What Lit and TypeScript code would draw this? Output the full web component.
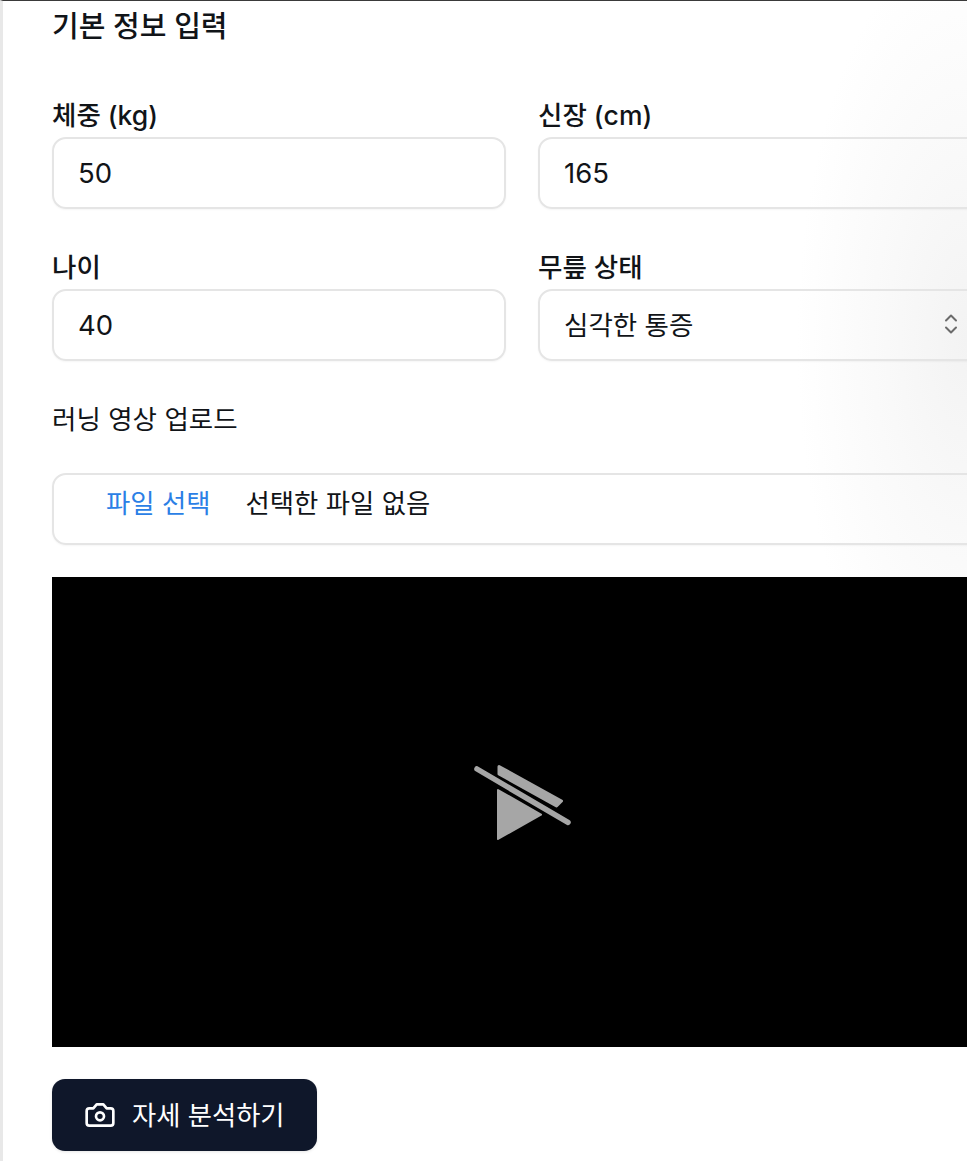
import { LitElement, html, css } from "lit";
import { customElement } from "lit/decorators.js";

@customElement("app-root")
export class AppRoot extends LitElement {
  static styles = css`
    :host {
      display: block;
      width: 967px;
      height: 1161px;
      overflow: hidden;
      font-family: Inter, "Noto Sans CJK KR", sans-serif;
      color: #111418;
    }
    .page {
      box-sizing: border-box;
      height: 1161px;
      border-top: 1px solid #3a3a3a;
      border-left: 3px solid #e8e8e8;
      padding: 3px 0 0 49px;
      background:
        radial-gradient(ellipse 170px 400px at 100% 340px, #f3f3f3 0%, rgba(247, 247, 247, 0.7) 50%, rgba(255, 255, 255, 0) 100%),
        #fff;
    }
    .content {
      width: 939px;
      display: flex;
      flex-direction: column;
    }
    h2 {
      margin: 0 0 48px;
      font-size: 29px;
      line-height: 46px;
      font-weight: 500;
    }
    .grid {
      display: grid;
      grid-template-columns: 453.5px 453.5px;
      column-gap: 32.5px;
      row-gap: 41px;
    }
    .field {
      display: flex;
      flex-direction: column;
      gap: 3px;
    }
    label {
      height: 36px;
      font-size: 26.5px;
      line-height: 34px;
      font-weight: 500;
    }
    .upload-label {
      height: 36px;
      margin-top: 41px;
      font-size: 26.5px;
      line-height: 34px;
      font-weight: 400;
    }
    .control {
      box-sizing: border-box;
      height: 72px;
      width: 100%;
      border: 2px solid #e5e5e5;
      border-radius: 14px;
      background: transparent;
      padding: 0 24px;
      font: inherit;
      font-size: 27.5px;
      color: #111418;
      display: flex;
      align-items: center;
      box-shadow: 0 1px 2px rgba(0, 0, 0, 0.04);
      outline: none;
    }
    .select {
      justify-content: space-between;
      font-size: 26.5px;
      padding-right: 31px;
      padding-bottom: 4px;
    }
    .chev {
      width: 16px;
      height: 24px;
      flex: none;
      margin-top: 2px;
    }
    .file {
      margin-top: 35px;
      padding-left: 52px;
      padding-bottom: 16px;
      gap: 35px;
      font-size: 26.4px;
    }
    .file .pick {
      color: #2b7fe6;
    }
    .video {
      margin-top: 32px;
      height: 470px;
      background: #000;
      display: flex;
      align-items: center;
      justify-content: center;
      padding: 0 0 12px 4px;
      box-sizing: border-box;
    }
    .video svg {
      width: 100px;
      height: 84px;
      flex: none;
    }
    button {
      margin-top: 32px;
      align-self: flex-start;
      height: 72px;
      width: 265px;
      box-sizing: border-box;
      border: none;
      border-radius: 13px;
      background: #0f172a;
      color: #fff;
      font: inherit;
      font-size: 26.3px;
      font-weight: 400;
      display: flex;
      align-items: center;
      gap: 16px;
      padding: 0 0 0 32px;
      box-shadow: 0 1px 3px rgba(0, 0, 0, 0.1);
    }
    button span {
      padding-bottom: 4px;
    }
    button svg {
      width: 32px;
      height: 32px;
      flex: none;
    }
  `;

  render() {
    return html`
      <div class="page">
        <div class="content">
          <h2>기본 정보 입력</h2>
          <div class="grid">
            <div class="field">
              <label for="w">체중 (kg)</label>
              <input id="w" class="control" type="text" value="50" />
            </div>
            <div class="field">
              <label for="h">신장 (cm)</label>
              <input id="h" class="control" type="text" value="165" />
            </div>
            <div class="field">
              <label for="a">나이</label>
              <input id="a" class="control" type="text" value="40" />
            </div>
            <div class="field">
              <label>무릎 상태</label>
              <div class="control select">
                <span>심각한 통증</span>
                <svg class="chev" viewBox="0 0 16 24" fill="none" stroke="#6b6b6b" stroke-width="2" stroke-linecap="round" stroke-linejoin="round">
                  <path d="M3 8.5 8 3.5 13 8.5" />
                  <path d="M3 15.5 8 20.5 13 15.5" />
                </svg>
              </div>
            </div>
          </div>
          <div class="upload-label">러닝 영상 업로드</div>
          <div class="control file">
            <span class="pick">파일 선택</span>
            <span>선택한 파일 없음</span>
          </div>
          <div class="video">
            <svg viewBox="0 0 100 84" fill="#a6a6a6">
              <path d="M24 26 L67 50.7 L24 75 Z" stroke="#a6a6a6" stroke-width="2" stroke-linejoin="round" />
              <path d="M25 2.5 L87.5 37 L82.5 42 L25 10 Z" stroke="#a6a6a6" stroke-width="3" stroke-linejoin="round" />
              <path d="M3 5 L94 58.4" fill="none" stroke="#a6a6a6" stroke-width="5.5" stroke-linecap="round" />
            </svg>
          </div>
          <button>
            <svg viewBox="0 0 24 24" fill="none" stroke="currentColor" stroke-width="2" stroke-linecap="round" stroke-linejoin="round">
              <path d="M14.5 4h-5L7 7H4a2 2 0 0 0-2 2v9a2 2 0 0 0 2 2h16a2 2 0 0 0 2-2V9a2 2 0 0 0-2-2h-3l-2.5-3z" />
              <circle cx="12" cy="13" r="3" />
            </svg>
            <span>자세 분석하기</span>
          </button>
        </div>
      </div>
    `;
  }
}
